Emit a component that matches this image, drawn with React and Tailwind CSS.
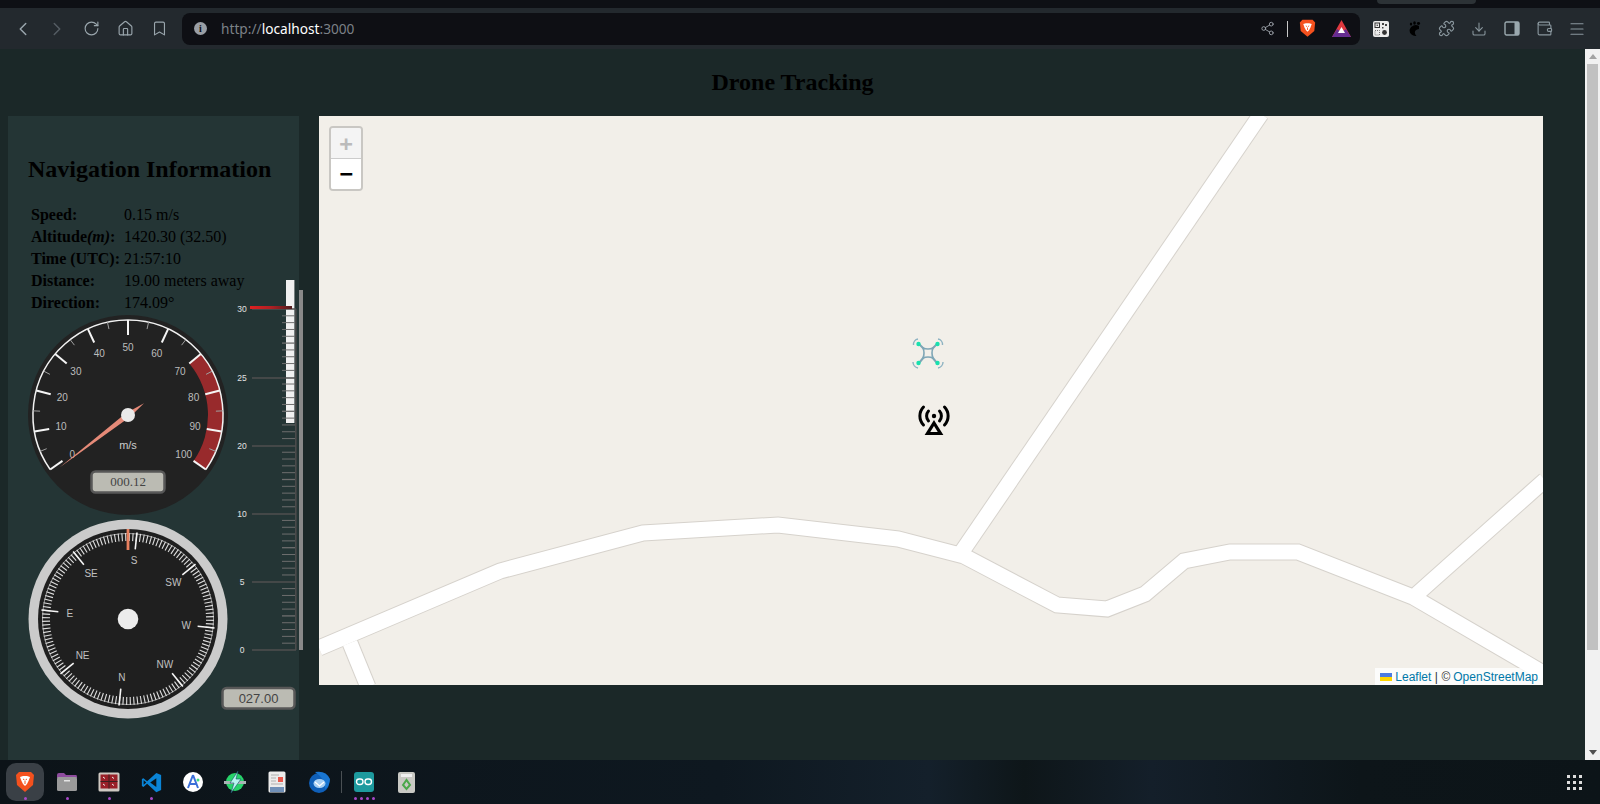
import React from "react";
import {
  ChevronLeft,
  ChevronRight,
  RotateCw,
  Home,
  Bookmark,
  Share2,
  Puzzle,
  Download,
  Wallet,
  Menu,
} from "lucide-react";

const polar = (cx, cy, r, deg) => {
  const a = ((deg - 90) * Math.PI) / 180;
  return [cx + r * Math.cos(a), cy + r * Math.sin(a)];
};

const range = (n) => Array.from({ length: n }, (_, i) => i);

const navRows = [
  ["Speed:", "0.15 m/s"],
  [
    <>
      Altitude<em>(m)</em>:
    </>,
    "1420.30 (32.50)",
  ],
  ["Time (UTC):", "21:57:10"],
  ["Distance:", "19.00 meters away"],
  ["Direction:", "174.09°"],
];

// Radial speed gauge
const SpeedGauge = () => {
  const c = 100;
  const angleOf = (v) => -125 + v * 2.5;
  const [ax, ay] = polar(c, c, 95, angleOf(0));
  const [bx, by] = polar(c, c, 95, angleOf(100));
  const r1 = polar(c, c, 95, angleOf(70));
  const r2 = polar(c, c, 95, angleOf(100));
  const r3 = polar(c, c, 80, angleOf(100));
  const r4 = polar(c, c, 80, angleOf(70));
  return (
    <svg width="200" height="200" viewBox="0 0 200 200" className="block shrink-0">
      <circle cx={c} cy={c} r="100" fill="#222222" />
      <path
        d={`M${r1[0]} ${r1[1]} A95 95 0 0 1 ${r2[0]} ${r2[1]} L${r3[0]} ${r3[1]} A80 80 0 0 0 ${r4[0]} ${r4[1]} Z`}
        fill="#982a2c"
      />
      <path d={`M${ax} ${ay} A95 95 0 1 1 ${bx} ${by}`} fill="none" stroke="#f2f2f2" strokeWidth="1.5" />
      {range(21).map((i) => {
        const major = i % 2 === 0;
        const [x1, y1] = polar(c, c, 95, angleOf(i * 5));
        const [x2, y2] = polar(c, c, major ? 80 : 88, angleOf(i * 5));
        return (
          <line
            key={i}
            x1={x1}
            y1={y1}
            x2={x2}
            y2={y2}
            stroke={major ? "#f5f5f5" : "#a0a0a0"}
            strokeWidth={major ? 2 : 1}
          />
        );
      })}
      {range(11).map((i) => {
        const [x, y] = polar(c, c, 68, angleOf(i * 10));
        return (
          <text
            key={i}
            x={x}
            y={y + 3.5}
            textAnchor="middle"
            fontSize="10"
            fill="#bdbdbd"
            className="font-['Liberation_Sans',sans-serif]"
          >
            {i * 10}
          </text>
        );
      })}
      <text x={c} y={134} textAnchor="middle" fontSize="11" fill="#cccccc" className="font-['Liberation_Sans',sans-serif]">
        m/s
      </text>
      <rect x="63.5" y="156.5" width="73" height="21" rx="4" fill="#bbbbb3" stroke="#585858" strokeWidth="2.5" />
      <text x={c} y={171} textAnchor="middle" fontSize="13" fill="#444444" className="font-['Liberation_Serif',serif]">
        000.12
      </text>
      <polygon points="16,-11.7 2.2,1.8 -68.5,52.5 -2.2,-1.8" fill="#e58a78" transform="translate(100 100)" />
      <circle cx={c} cy={c} r="7" fill="#e9e9e9" />
    </svg>
  );
};

// Compass dial, rotated by the current heading
const Compass = () => {
  const c = 100;
  const heading = 174.09;
  const labels = ["N", "NE", "E", "SE", "S", "SW", "W", "NW"];
  return (
    <svg width="200" height="200" viewBox="0 0 200 200" className="block shrink-0">
      <circle cx={c} cy={c} r="99.5" fill="#cbcbcb" />
      <circle cx={c} cy={c} r="90" fill="#1f1f1f" />
      <circle cx={c} cy={c} r="85.5" fill="none" stroke="#cfcfcf" strokeWidth="0.7" />
      {range(144).map((i) => {
        const a = i * 2.5 - heading;
        const [x1, y1] = polar(c, c, 86, a);
        const [x2, y2] = polar(c, c, 78, a);
        return <line key={i} x1={x1} y1={y1} x2={x2} y2={y2} stroke="#dedede" strokeWidth="1.1" />;
      })}
      {labels.map((l, i) => {
        const a = i * 45 - heading;
        const [x1, y1] = polar(c, c, 87, a);
        const [x2, y2] = polar(c, c, 70, a);
        const [tx, ty] = polar(c, c, 58.5, a);
        return (
          <g key={l}>
            <line x1={x1} y1={y1} x2={x2} y2={y2} stroke="#f5f5f5" strokeWidth="1.6" />
            <text
              x={tx}
              y={ty + 3.6}
              textAnchor="middle"
              fontSize="10"
              fill="#c0c0c0"
              className="font-['Liberation_Sans',sans-serif]"
            >
              {l}
            </text>
          </g>
        );
      })}
      <rect x="98.6" y="10" width="2.8" height="21" fill="#e8805f" />
      <circle cx={c} cy={c} r="10.3" fill="#ececec" />
    </svg>
  );
};

// Vertical altitude bar
const LinearGauge = () => {
  const top = 33;
  const bottom = 374;
  const labels = [
    ["30", 0],
    ["25", 69],
    ["20", 137],
    ["10", 205],
    ["5", 273],
    ["0", 341],
  ];
  return (
    <svg width="68" height="440" viewBox="0 0 68 440" className="block shrink-0 overflow-visible">
      <defs>
        <linearGradient id="redNeedle" x1="0" x2="1" y1="0" y2="0">
          <stop offset="0" stopColor="#e02020" />
          <stop offset="0.5" stopColor="#b02024" />
          <stop offset="1" stopColor="#4f1c1e" />
        </linearGradient>
      </defs>
      <rect x="59" y="14" width="4" height="360" fill="#8a8a8a" />
      <rect x="46" y="4" width="8.4" height="143" fill="#f0f0f0" />
      <rect x="55" y="33" width="1.6" height="341" fill="#4a4a4a" />
      {range(51).map((i) => {
        const y = top + (i * (bottom - top)) / 50;
        return i % 10 === 0 ? null : (
          <line
            key={i}
            x1="42"
            x2="55"
            y1={y}
            y2={y}
            stroke="#6e6e6e"
            strokeWidth={i % 5 === 0 ? 1.3 : 1}
          />
        );
      })}
      {labels.map(([l, dy]) => (
        <g key={l}>
          <line x1="12" x2="56" y1={top + dy} y2={top + dy} stroke="#4f4f4f" strokeWidth="1.4" />
          <text
            x="2"
            y={top + dy + 3}
            textAnchor="middle"
            fontSize="8.5"
            fill="#e2e2e2"
            className="font-['Liberation_Sans',sans-serif]"
          >
            {l}
          </text>
        </g>
      ))}
      <rect x="10" y="30" width="42" height="3" fill="url(#redNeedle)" />
      <rect x="-17.5" y="412" width="72" height="20.5" rx="4" fill="#bbbbb3" stroke="#585858" strokeWidth="2.5" />
      <text x="18.5" y="427" textAnchor="middle" fontSize="13" fill="#444444" className="font-['Liberation_Sans',sans-serif]">
        027.00
      </text>
    </svg>
  );
};

const MapRoads = () => {
  const lines = [
    "942,-2 642,437",
    "0,532 181,455 324,417 459,409 579,423 645,440 738,489 788,493 826,478 865,445 911,436 979,436 1094,481 1226,558",
    "1226,364 1098,478",
    "31,527 49,571",
  ];
  return (
    <svg width="1224" height="569" viewBox="0 0 1224 569" className="block">
      {lines.map((p) => (
        <polyline key={"c" + p} points={p} fill="none" stroke="#d6d2cc" strokeWidth="17" />
      ))}
      {lines.map((p) => (
        <polyline key={p} points={p} fill="none" stroke="#ffffff" strokeWidth="15" />
      ))}
    </svg>
  );
};

const DroneIcon = () => (
  <svg width="32" height="32" viewBox="0 0 32 32" fill="none" className="absolute left-[593px] top-[221px]">
    <path d="M7 7 L12 12 M25 7 L20 12 M7 26 L12 20 M25 26 L20 20" stroke="#7fa6b6" strokeWidth="2" />
    <path d="M11 11 Q16 13 21 11 Q19 16 21 21 Q16 19 11 21 Q13 16 11 11 Z" stroke="#7fa6b6" strokeWidth="1.6" />
    <circle cx="6.5" cy="7" r="2.2" fill="#19e0ae" />
    <circle cx="25.5" cy="7" r="2.2" fill="#19e0ae" />
    <circle cx="6.5" cy="26" r="2.2" fill="#19e0ae" />
    <circle cx="25.5" cy="26" r="2.2" fill="#19e0ae" />
    <path
      d="M1.5 8 A5.5 5.5 0 0 1 6 2 M26 2 A5.5 5.5 0 0 1 30.5 8 M1 25 A6 6 0 0 0 6 31 M26 31 A6 6 0 0 0 31 25"
      stroke="#8db2c1"
      strokeWidth="1.4"
    />
  </svg>
);

const TowerIcon = () => (
  <svg width="34" height="34" viewBox="0 0 34 34" fill="none" className="absolute left-[598px] top-[288px]">
    <circle cx="17" cy="12" r="2.2" fill="#000" />
    <path d="M17 19 L23.5 29.5 H10.5 Z" stroke="#000" strokeWidth="3.2" strokeLinejoin="miter" />
    <path
      d="M11.5 7 A7.5 7.5 0 0 0 11.5 17 M22.5 7 A7.5 7.5 0 0 1 22.5 17 M6.5 3 A13 13 0 0 0 6.5 21 M27.5 3 A13 13 0 0 1 27.5 21"
      stroke="#000"
      strokeWidth="3"
      strokeLinecap="round"
    />
  </svg>
);

const BraveIcon = ({ size = 18 }) => (
  <svg width={size} height={size * 1.1} viewBox="0 0 20 22">
    <path d="M4 1 H16 L19 4 L18 14 L10 21 L2 14 L1 4 Z" fill="#f4511e" />
    <path d="M5 6 L8 5 H12 L15 6 L13.5 10 L12 13 L10 15 L8 13 L6.5 10 Z" fill="#ffffff" />
    <path d="M8 8 L9.5 9 M12 8 L10.5 9 M10 10 V13" stroke="#f4511e" strokeWidth="1" />
  </svg>
);

const BatIcon = () => (
  <svg width="19" height="17" viewBox="0 0 19 17">
    <path d="M9.5 0 L19 17 H0 Z" fill="#e0393e" />
    <path d="M0 17 L5 9 L9.5 12 L14 9 L19 17 Z" fill="#662d91" />
    <path d="M9.5 7 L13 13 H6 Z" fill="#ffffff" />
  </svg>
);

const QrIcon = () => (
  <svg width="16" height="16" viewBox="0 0 16 16" fill="none" className="rounded-[2px] bg-[#ececec]">
    <rect x="2" y="2" width="4.5" height="4.5" stroke="#333" strokeWidth="1" />
    <rect x="3.6" y="3.6" width="1.3" height="1.3" fill="#333" />
    <rect x="2" y="9.5" width="4.5" height="4.5" stroke="#555" strokeWidth="0.8" strokeDasharray="1 1" />
    <path d="M9 2h2v2H9z M12 3h2v2h-2z M9 6h1.5v1.5H9z" fill="#444" />
    <circle cx="11.5" cy="11.5" r="2.4" fill="#333" />
  </svg>
);

const GnomeIcon = () => (
  <svg width="14" height="16" viewBox="0 0 14 16" fill="#000">
    <path d="M12 5 A6 5.5 0 1 0 9.5 15 C7 12 7 9 12 8 Z" />
    <ellipse cx="4" cy="3" rx="1.2" ry="1.6" />
    <ellipse cx="7.5" cy="2" rx="1.3" ry="1.7" />
    <ellipse cx="11.5" cy="2.5" rx="1.6" ry="1.4" />
  </svg>
);

const SidebarIcon = () => (
  <svg width="16" height="15" viewBox="0 0 16 15" fill="none">
    <rect x="1" y="1" width="14" height="13" rx="1.5" stroke="#9aa8ae" strokeWidth="1.4" />
    <rect x="10.5" y="1" width="4.5" height="13" fill="#9aa8ae" />
  </svg>
);

const ToolIcon = ({ children }) => (
  <div className="flex w-[34px] justify-center text-[#9aa6ad]">{children}</div>
);

const ExtIcon = ({ children }) => (
  <div className="flex w-[32.7px] justify-center text-[#8a979e]">{children}</div>
);

const Toolbar = () => (
  <div className="flex h-[41px] items-center bg-[#23292e] pl-[6px]">
    <div className="flex items-center">
      <ToolIcon>
        <ChevronLeft size={22} strokeWidth={1.6} />
      </ToolIcon>
      <ToolIcon>
        <ChevronRight size={22} strokeWidth={1.6} className="text-[#555d63]" />
      </ToolIcon>
      <ToolIcon>
        <RotateCw size={17} strokeWidth={1.6} />
      </ToolIcon>
      <ToolIcon>
        <Home size={17} strokeWidth={1.6} />
      </ToolIcon>
      <ToolIcon>
        <Bookmark size={17} strokeWidth={1.6} />
      </ToolIcon>
    </div>
    <div className="ml-[6px] flex h-8 w-[1178px] items-center rounded-lg bg-[#0e0f14] pl-[12px] pr-[8px]">
      <div className="flex h-[13px] w-[13px] items-center justify-center rounded-full bg-[#9a9fa6] font-['Liberation_Serif',serif] text-[10px] font-bold text-[#0e0f14]">
        i
      </div>
      <span className="ml-[14px] pt-[1px] font-['Noto_Sans',sans-serif] text-[13.7px] text-[#7c8187]">
        http://<span className="text-white">localhost</span>:3000
      </span>
      <div className="ml-auto flex items-center">
        <Share2 size={15} strokeWidth={1.5} className="text-[#9a9fa6]" />
        <div className="ml-[12px] h-[16px] w-px bg-[#c8c8c8]" />
        <div className="ml-[11px]">
          <BraveIcon size={17} />
        </div>
        <div className="ml-[16px] mr-[1px]">
          <BatIcon />
        </div>
      </div>
    </div>
    <div className="ml-[5px] flex items-center">
      <ExtIcon>
        <QrIcon />
      </ExtIcon>
      <ExtIcon>
        <GnomeIcon />
      </ExtIcon>
      <ExtIcon>
        <Puzzle size={17} strokeWidth={1.6} />
      </ExtIcon>
      <ExtIcon>
        <Download size={16} strokeWidth={1.6} />
      </ExtIcon>
      <ExtIcon>
        <SidebarIcon />
      </ExtIcon>
      <ExtIcon>
        <Wallet size={17} strokeWidth={1.6} />
      </ExtIcon>
      <ExtIcon>
        <Menu size={18} strokeWidth={1.6} />
      </ExtIcon>
    </div>
  </div>
);

const NavPanel = () => (
  <div className="h-[644px] w-[291px] shrink-0 bg-[#243535] pl-5 pt-[39px] font-['Liberation_Serif',serif] text-black">
    <h2 className="text-[24px] leading-[28px] font-bold whitespace-nowrap">Navigation Information</h2>
    <table className="ml-[2px] mt-[21px] text-[16px] leading-[22px]">
      <tbody>
        {navRows.map(([label, value], i) => (
          <tr key={i} className="h-[22px]">
            <th className="w-[93px] px-px py-0 text-left font-bold whitespace-nowrap">{label}</th>
            <td className="px-px py-0 whitespace-nowrap">{value}</td>
          </tr>
        ))}
      </tbody>
    </table>
    <div className="mt-px flex">
      <div className="flex flex-col gap-1">
        <SpeedGauge />
        <Compass />
      </div>
      <div className="ml-[12px] -mt-[39px]">
        <LinearGauge />
      </div>
    </div>
  </div>
);

const MapView = () => (
  <div className="relative ml-5 h-[569px] w-[1224px] shrink-0 overflow-hidden bg-[#f2efe9]">
    <MapRoads />
    <DroneIcon />
    <TowerIcon />
    <div className="absolute left-[10px] top-[10px] w-[34px] rounded-[4px] border-2 border-[#c9c7c3] font-['DejaVu_Sans_Mono',monospace] text-[22px] font-bold">
      <div className="flex h-[31px] items-center justify-center rounded-t-[2px] border-b border-[#cccccc] bg-[#f4f4f4] text-[#bbbbbb]">
        +
      </div>
      <div className="flex h-[30px] items-center justify-center rounded-b-[2px] bg-white pb-[1px] text-black">−</div>
    </div>
    <div className="absolute bottom-0 right-0 flex h-[17px] items-center bg-white/80 px-[5px] font-['Liberation_Sans',sans-serif] text-[12px] text-[#333333]">
      <svg width="12" height="8" viewBox="0 0 12 8" className="mr-[3px]">
        <rect width="12" height="4" fill="#4c7be1" />
        <rect y="4" width="12" height="4" fill="#ffd500" />
      </svg>
      <span className="text-[#0078a8]">Leaflet</span>
      <span className="mx-[3.5px]">|</span>© <span className="ml-[3px] text-[#0078a8]">OpenStreetMap</span>
    </div>
  </div>
);

const Scrollbar = () => (
  <div className="flex w-[15px] shrink-0 flex-col items-center bg-[#f1f1f1]">
    <div className="mt-[5px] h-0 w-0 border-x-[4px] border-b-[5px] border-x-transparent border-b-[#a3a3a3]" />
    <div className="mt-[5px] h-[586px] w-[11px] bg-[#c1c1c1]" />
    <div className="mt-auto mb-[5px] h-0 w-0 border-x-[4px] border-t-[5px] border-x-transparent border-t-[#505050]" />
  </div>
);

const FolderIcon = () => (
  <svg width="22" height="20" viewBox="0 0 22 20">
    <path d="M1 3 Q1 1 3 1 H8 L10 3 H20 Q21 3 21 5 V6 H1 Z" fill="#8e4c9e" />
    <rect x="1" y="5" width="20" height="14" rx="1.5" fill="#9a9a9a" />
    <rect x="8" y="8" width="6" height="1.5" fill="#e4e4e4" />
  </svg>
);

const CalcIcon = () => (
  <svg width="22" height="20" viewBox="0 0 22 20">
    <rect x="0.5" y="0.5" width="21" height="19" rx="1.5" fill="#cfc9c2" />
    <rect x="2.5" y="2.5" width="17" height="14" fill="#9a2028" />
    <path d="M11 2.5 V16.5 M2.5 9.5 H19.5" stroke="#3a2020" strokeWidth="1" />
    <path d="M5 5 L7 6.5 M14 5 L16 6.5 M5 12 L7 13.5 M14 12 L16 13.5" stroke="#eee" strokeWidth="1" />
  </svg>
);

const VsCodeIcon = () => (
  <svg width="21" height="21" viewBox="0 0 24 24">
    <path d="M17.5 1 L23 3.5 V20.5 L17.5 23 L7 13.5 L2.8 17 L1 16 V8 L2.8 7 L7 10.5 Z" fill="#0a84d6" />
    <path d="M17.5 7 L10.5 12 L17.5 17 Z" fill="#0b1519" />
    <path d="M3 9.5 L6 12 L3 14.5 Z" fill="#0b1519" />
  </svg>
);

const AstudioIcon = () => (
  <svg width="20" height="20" viewBox="0 0 20 20" fill="none">
    <circle cx="10" cy="10" r="10" fill="#ffffff" />
    <path d="M10 3 L5 16 M10 3 L15 16 M6.5 12 H13.5" stroke="#3b6fd8" strokeWidth="2" />
    <circle cx="15" cy="8" r="1.5" fill="#3ddc84" />
  </svg>
);

const BoltIcon = () => (
  <svg width="22" height="22" viewBox="0 0 22 22">
    <circle cx="11" cy="11" r="9" fill="#27d36a" />
    <rect x="0" y="10" width="22" height="3" fill="#a8b4b4" />
    <path d="M14 0 L6 12 H10 L7 22 L17 8 H12 Z" fill="#b8f4f0" stroke="#14506a" strokeWidth="0.6" />
  </svg>
);

const NewsIcon = () => (
  <svg width="18" height="22" viewBox="0 0 18 22">
    <rect x="0.5" y="0.5" width="17" height="21" rx="1.5" fill="#ececec" />
    <rect x="10" y="6" width="5" height="5" fill="#e8584c" />
    <path d="M3 4 H11 M3 7 H8 M3 10 H8 M3 13 H15" stroke="#b0b0b0" strokeWidth="1" />
    <rect x="2" y="16" width="14" height="5" fill="#7090b8" />
  </svg>
);

const BirdIcon = () => (
  <svg width="23" height="22" viewBox="0 0 23 22">
    <circle cx="11" cy="12" r="10" fill="#0f5fb8" />
    <path d="M7 1 Q18 -1 22 8 Q22 15 17 18 Q18 8 7 1 Z" fill="#1976d2" />
    <ellipse cx="11.5" cy="12.5" rx="6" ry="4.5" fill="#a8d0f4" />
    <path d="M7 11 L11.5 15 L16 11" fill="none" stroke="#ffffff" strokeWidth="1.2" />
  </svg>
);

const ArduinoIcon = () => (
  <svg width="20" height="20" viewBox="0 0 20 20" fill="none">
    <rect width="20" height="20" rx="3" fill="#1d9a9e" />
    <rect x="2.5" y="7" width="6.5" height="5.5" rx="2.7" stroke="#fff" strokeWidth="1.4" />
    <rect x="11" y="7" width="6.5" height="5.5" rx="2.7" stroke="#fff" strokeWidth="1.4" />
  </svg>
);

const TrashIcon = () => (
  <svg width="17" height="21" viewBox="0 0 17 21">
    <rect width="17" height="21" rx="2" fill="#c9c9c4" />
    <rect x="3" y="2" width="11" height="3" fill="#f0f0f0" />
    <path d="M5 13 L8.5 8 L12 13 L8.5 17 Z" fill="none" stroke="#4aa84a" strokeWidth="2" />
  </svg>
);

const dockItems = [
  { icon: <BraveIcon size={20} />, dots: 1, active: true },
  { icon: <FolderIcon />, dots: 1 },
  { icon: <CalcIcon />, dots: 1 },
  { icon: <VsCodeIcon />, dots: 1 },
  { icon: <AstudioIcon />, dots: 0 },
  { icon: <BoltIcon />, dots: 0 },
  { icon: <NewsIcon />, dots: 0 },
  { icon: <BirdIcon />, dots: 0 },
  { sep: true },
  { icon: <ArduinoIcon />, dots: 4 },
  { icon: <TrashIcon />, dots: 0 },
];

const Dock = () => (
  <div className="flex h-[44px] shrink-0 items-center bg-[#0d1519] bg-[linear-gradient(90deg,#0c1318_0%,#0e1820_45%,#14202b_58%,#0e1619_64%,#141f2a_72%,#0d1519_85%,#0c1418_100%)] pl-[4px]">
    {dockItems.map((item, i) =>
      item.sep ? (
        <div key={i} className="mx-[1px] h-[22px] w-px bg-[#4a5054]" />
      ) : (
        <div key={i} className="relative flex h-[38px] w-[42px] items-center justify-center">
          <div
            className={`flex h-[38px] w-[38px] items-center justify-center rounded-[10px] ${
              item.active ? "bg-[#3a4046]" : ""
            }`}
          >
            {item.icon}
          </div>
          <div className="absolute bottom-[1px] flex gap-[3px]">
            {range(item.dots).map((d) => (
              <div key={d} className="h-[3px] w-[3px] rounded-full bg-[#a848c8]" />
            ))}
          </div>
        </div>
      )
    )}
    <div className="ml-auto mr-[18px] grid grid-cols-3 gap-[3px]">
      {range(9).map((i) => (
        <div key={i} className="h-[3px] w-[3px] bg-[#dddddd]" />
      ))}
    </div>
  </div>
);

const App = () => {
  return (
    <div className="flex h-screen w-full flex-col overflow-hidden bg-[#1b2828]">
      <div className="relative h-[8px] shrink-0 bg-[#0e1015]">
        <div className="absolute left-[1377px] top-0 h-[4px] w-[99px] rounded-b-lg bg-[#2c3236]" />
      </div>
      <Toolbar />
      <div className="flex min-h-0 flex-1">
        <div className="min-w-0 flex-1">
          <h1 className="flex h-[67px] items-center justify-center pb-[2px] font-['Liberation_Serif',serif] text-[24px] font-bold text-black">
            Drone Tracking
          </h1>
          <div className="flex pl-2">
            <NavPanel />
            <MapView />
          </div>
        </div>
        <Scrollbar />
      </div>
      <Dock />
    </div>
  );
};

export default App;
